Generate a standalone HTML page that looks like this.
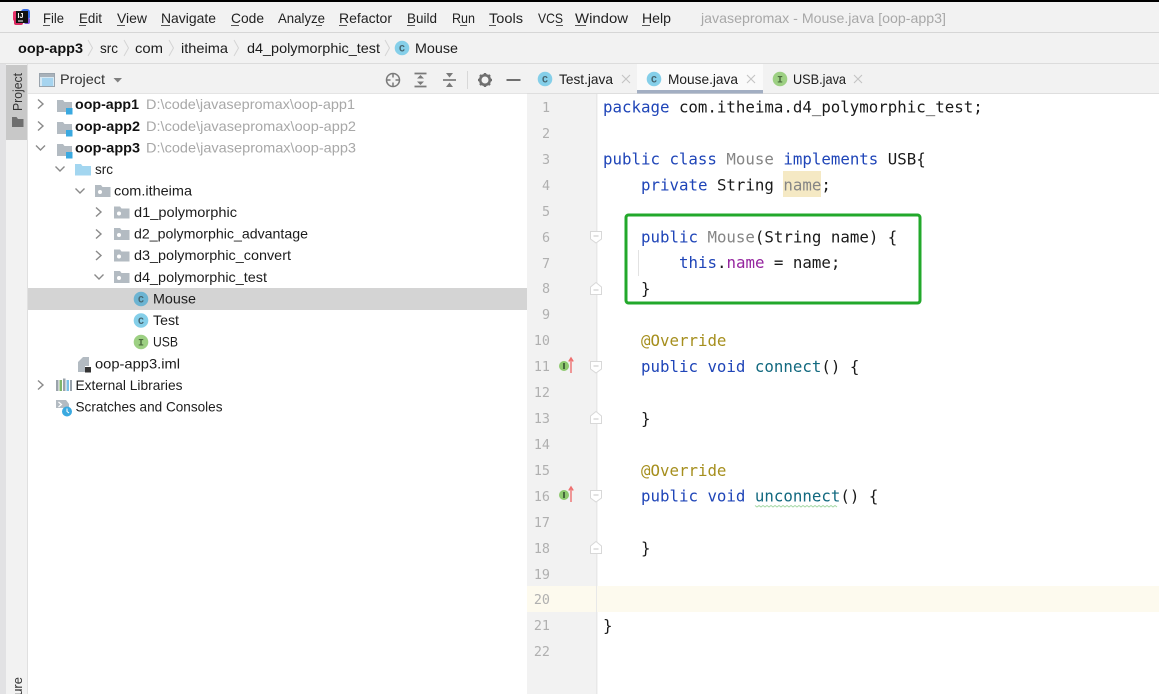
<!DOCTYPE html>
<html><head><meta charset="utf-8"><title>Mouse.java</title>
<style>
html,body{margin:0;padding:0;background:#fff;width:1159px;height:694px;overflow:hidden}
svg{display:block;filter:blur(.35px)}
text{font-family:"Liberation Sans",sans-serif;font-size:14px;fill:#1c1c1c}
.m{fill:#222}
.g{fill:#a8a8a8}
.b{font-weight:bold;fill:#111}
.c text,text.c{font-family:"DejaVu Sans Mono","Liberation Mono",monospace;font-size:15.78px;fill:#1a1a1a}
.n text{font-family:"DejaVu Sans Mono","Liberation Mono",monospace;font-size:13.4px;fill:#b0b0b0}
.k{fill:#1f45b8 !important}
.u{fill:#858585 !important}
.p{fill:#95259f !important}
.f{fill:#12697f !important}
.a{fill:#a68f1e !important}
.ic{font-family:"Liberation Mono",monospace;font-size:10px;font-weight:bold;fill:#46656f;text-anchor:middle}
.ii{font-family:"Liberation Mono",monospace;font-size:10px;font-weight:bold;fill:#4a6b3c;text-anchor:middle}
</style></head><body>
<svg width="1159" height="694" viewBox="0 0 1159 694" xmlns="http://www.w3.org/2000/svg">
<defs>
<g id="chev"><path d="M-3-4.5 2 0-3 4.5" fill="none" stroke="#8a8a8a" stroke-width="1.4"/></g>
<g id="down"><path d="M-4.5-2.5 0 2 4.5-2.5" fill="none" stroke="#8a8a8a" stroke-width="1.4"/></g>
<g id="bc"><path d="M0-8 4.5 0 0 8" fill="none" stroke="#d4d4d4" stroke-width="1"/></g>
<g id="mod"><path d="M0-5H6L7.5-3H15V7H0Z" fill="#b3bbc2"/><rect x="9" y="3" width="6.5" height="6.5" fill="#3aa9e0"/></g>
<g id="pkg"><path d="M0-6H6L7.5-4H15.5V6H0Z" fill="#b3bbc2"/><circle cx="5" cy="1" r="2" fill="#fff"/></g>
<g id="cls"><circle r="7.3" fill="#85cfe9"/><text class="ic" y="3.5">C</text></g>
<g id="int"><circle r="7.3" fill="#9dd083"/><text class="ii" y="3.5">I</text></g>
<g id="x"><path d="M-4-4 4 4M4-4-4 4" stroke="#c4c4c4" stroke-width="1.1"/></g>
<g id="fo"><path d="M.5.5H11.5V8L6 12 .5 8Z" fill="#fff" stroke="#d8d8d8"/><path d="M3.5 5H8.5" stroke="#c4c4c4"/></g>
<g id="fc"><path d="M.5 12.5H11.5V5L6 .5 .5 5Z" fill="#fff" stroke="#d8d8d8"/><path d="M3.5 8H8.5" stroke="#c4c4c4"/></g>
<g id="imp"><circle cx="0" cy="0" r="5" fill="#8ec96f"/><rect x="-1" y="-3" width="2" height="6" fill="#44663a"/><path d="M7-8V7M4.8-4.5 7-8 9.2-4.5" fill="none" stroke="#ee7070" stroke-width="1.4"/></g>
</defs>

<!-- backgrounds -->
<rect width="1159" height="694" fill="#fff"/>
<rect y="2" width="1159" height="62" fill="#f2f2f2"/>
<rect width="1159" height="2" fill="#000"/>
<rect y="32" width="1159" height="1" fill="#d6d6d6"/>
<rect y="63" width="1159" height="1" fill="#dcdcdc"/>
<rect y="64" width="6" height="630" fill="#e2e2e4"/>
<rect x="6" y="64" width="21" height="630" fill="#f2f2f2"/>
<rect x="27" y="64" width="1" height="630" fill="#e0e0e0"/>
<rect x="6" y="65" width="21" height="75" fill="#c8c8c8"/>
<rect x="28" y="64" width="499" height="29" fill="#f2f2f2"/>
<rect x="28" y="93" width="499" height="1" fill="#e4e4e4"/>
<rect x="28" y="288" width="499" height="22" fill="#d4d4d4"/>
<rect x="527" y="64" width="632" height="29" fill="#f2f2f2"/>
<rect x="527" y="93" width="632" height="1" fill="#dedede"/>
<rect x="637" y="64" width="126" height="27" fill="#fafafa"/>
<rect x="637" y="90" width="126" height="3.5" fill="#a2aec2"/>
<rect x="527" y="94" width="69" height="600" fill="#f2f2f2"/>
<rect x="596" y="94" width="1.5" height="600" fill="#e8e8e8"/>
<rect x="597" y="586" width="562" height="26" fill="#fdfaee"/>
<rect x="527" y="586" width="69" height="26" fill="#fdfaee"/>

<!-- logo -->
<rect x="13" y="11" width="9" height="10" rx="2" fill="#e8356b"/>
<rect x="21" y="9" width="9" height="11" rx="3" fill="#3a6ee8"/>
<rect x="14" y="18" width="9" height="7" rx="2" fill="#d9295f"/>
<rect x="24" y="18" width="6" height="6" rx="2" fill="#7a4fd8"/>
<rect x="16" y="11" width="12" height="12" fill="#111"/>
<text x="17.500" y="18" style="font-size:7px;font-weight:bold;fill:#fff">IJ</text>
<rect x="18" y="20.500" width="5" height="1" fill="#fff"/>

<!-- menu -->
<g class="menu">
<text class="m" x="43" y="23" textLength="21" lengthAdjust="spacingAndGlyphs">File</text>
<text class="m" x="79" y="23" textLength="23" lengthAdjust="spacingAndGlyphs">Edit</text>
<text class="m" x="117" y="23" textLength="30" lengthAdjust="spacingAndGlyphs">View</text>
<text class="m" x="161" y="23" textLength="55" lengthAdjust="spacingAndGlyphs">Navigate</text>
<text class="m" x="231" y="23" textLength="33" lengthAdjust="spacingAndGlyphs">Code</text>
<text class="m" x="278" y="23" textLength="47" lengthAdjust="spacingAndGlyphs">Analyze</text>
<text class="m" x="339" y="23" textLength="53" lengthAdjust="spacingAndGlyphs">Refactor</text>
<text class="m" x="407" y="23" textLength="30" lengthAdjust="spacingAndGlyphs">Build</text>
<text class="m" x="452" y="23" textLength="23" lengthAdjust="spacingAndGlyphs">Run</text>
<text class="m" x="489" y="23" textLength="34" lengthAdjust="spacingAndGlyphs">Tools</text>
<text class="m" x="538" y="23" textLength="25" lengthAdjust="spacingAndGlyphs">VCS</text>
<text class="m" x="575" y="23" textLength="53" lengthAdjust="spacingAndGlyphs">Window</text>
<text class="m" x="642" y="23" textLength="29" lengthAdjust="spacingAndGlyphs">Help</text>
<text class="g" x="701" y="23" textLength="245" lengthAdjust="spacingAndGlyphs">javasepromax - Mouse.java [oop-app3]</text>
<path d="M43 25.5h7M79 25.5h7M117 25.5h8M161 25.5h9M231 25.5h8M316 25.5h6M339 25.5h8M407 25.5h8M460 25.5h7M489 25.5h7M556 25.5h7M575 25.5h11M642 25.5h8" stroke="#555" stroke-width="1"/>
</g>

<!-- breadcrumb -->
<text class="b" x="18" y="53" textLength="65" lengthAdjust="spacingAndGlyphs">oop-app3</text>
<use href="#bc" x="88" y="48"/>
<text x="100" y="53" textLength="18" lengthAdjust="spacingAndGlyphs">src</text>
<use href="#bc" x="124" y="48"/>
<text x="135" y="53" textLength="28" lengthAdjust="spacingAndGlyphs">com</text>
<use href="#bc" x="169" y="48"/>
<text x="181" y="53" textLength="47" lengthAdjust="spacingAndGlyphs">itheima</text>
<use href="#bc" x="234" y="48"/>
<text x="247" y="53" textLength="133" lengthAdjust="spacingAndGlyphs">d4_polymorphic_test</text>
<use href="#bc" x="385" y="48"/>
<use href="#cls" x="402" y="48"/>
<text x="415" y="53" textLength="43" lengthAdjust="spacingAndGlyphs">Mouse</text>

<!-- left strip -->
<text transform="translate(22,111) rotate(-90)" textLength="38" lengthAdjust="spacingAndGlyphs" style="font-size:13px;fill:#333">Project</text>
<path d="M12 117H16.500L18 119H23.500V127H12Z" fill="#6e6e6e"/>
<text transform="translate(22,677) rotate(-90)" text-anchor="end" style="font-size:13px;fill:#333">ure</text>

<!-- project header -->
<rect x="39.500" y="73.500" width="15" height="13" fill="#d6e8f3" stroke="#9aa4ad"/>
<rect x="40" y="74" width="14" height="3" fill="#a9b2ba"/>
<rect x="42" y="78" width="11" height="8" fill="#a6d4ef"/>
<text x="60" y="84" textLength="45" lengthAdjust="spacingAndGlyphs" style="fill:#333">Project</text>
<path d="M113.500 78H122L117.750 82.500Z" fill="#808080"/>
<g fill="none" stroke="#7a7a7a" stroke-width="1.5">
<circle cx="393" cy="80" r="6.500"/>
<path d="M393 73.500v4M393 82.500v4M386.500 80h4M395.500 80h4"/>
<path d="M414.500 73.500h12M414.500 86.500h12" stroke-width="1.7"/>
<path d="M443 80h13" stroke-width="1.7"/>
</g>
<path d="M417 78.500 420.500 75 424 78.500ZM417 81.500 420.500 85 424 81.500Z" fill="#7a7a7a"/>
<path d="M446 73 449.500 77.500 453 73ZM446 87 449.500 82.500 453 87Z" fill="#7a7a7a"/>
<rect x="467" y="71" width="1" height="18" fill="#d8d8d8"/>
<g transform="translate(485,80)">
<circle r="4.800" fill="none" stroke="#6f6f6f" stroke-width="2.600"/>
<path d="M0-7V-4.500M0 7V4.500M-7 0H-4.500M7 0H4.500M-5-5-3.300-3.300M5 5 3.300 3.300M5-5 3.300-3.300M-5 5-3.300 3.300" stroke="#6f6f6f" stroke-width="2.400"/>
</g>
<rect x="506.500" y="79" width="14" height="2" fill="#6f6f6f"/>

<!-- tree -->
<use href="#chev" x="41" y="104"/><use href="#mod" x="57" y="105"/>
<text class="b" x="75" y="109" textLength="64" lengthAdjust="spacingAndGlyphs">oop-app1</text>
<text class="g" x="146" y="109" textLength="209" lengthAdjust="spacingAndGlyphs">D:\code\javasepromax\oop-app1</text>
<use href="#chev" x="41" y="126"/><use href="#mod" x="57" y="127"/>
<text class="b" x="75" y="131" textLength="65" lengthAdjust="spacingAndGlyphs">oop-app2</text>
<text class="g" x="146" y="131" textLength="210" lengthAdjust="spacingAndGlyphs">D:\code\javasepromax\oop-app2</text>
<use href="#down" x="40.500" y="148"/><use href="#mod" x="57" y="149"/>
<text class="b" x="75" y="152.500" textLength="65" lengthAdjust="spacingAndGlyphs">oop-app3</text>
<text class="g" x="146" y="152.500" textLength="210" lengthAdjust="spacingAndGlyphs">D:\code\javasepromax\oop-app3</text>
<use href="#down" x="60" y="169"/>
<path d="M75 164H81L82.500 166H91V175.500H75Z" fill="#a3d6f0"/>
<text x="95" y="174" textLength="18" lengthAdjust="spacingAndGlyphs">src</text>
<use href="#down" x="80" y="191"/><use href="#pkg" x="95" y="191"/>
<text x="114" y="195.500" textLength="78" lengthAdjust="spacingAndGlyphs">com.itheima</text>
<use href="#chev" x="99" y="212"/><use href="#pkg" x="114" y="212.500"/>
<text x="134" y="217" textLength="103" lengthAdjust="spacingAndGlyphs">d1_polymorphic</text>
<use href="#chev" x="99" y="234"/><use href="#pkg" x="114" y="234"/>
<text x="134" y="238.500" textLength="174" lengthAdjust="spacingAndGlyphs">d2_polymorphic_advantage</text>
<use href="#chev" x="99" y="255.500"/><use href="#pkg" x="114" y="255.500"/>
<text x="134" y="260" textLength="157" lengthAdjust="spacingAndGlyphs">d3_polymorphic_convert</text>
<use href="#down" x="99" y="277"/><use href="#pkg" x="114" y="277"/>
<text x="134" y="282" textLength="133" lengthAdjust="spacingAndGlyphs">d4_polymorphic_test</text>
<g transform="translate(141,299)"><circle r="7.300" fill="#6cb4d2"/><text class="ic" y="3.500">C</text></g>
<text x="153" y="303.500" textLength="43" lengthAdjust="spacingAndGlyphs">Mouse</text>
<use href="#cls" x="141" y="320.500"/>
<text x="153" y="325" textLength="26" lengthAdjust="spacingAndGlyphs">Test</text>
<use href="#int" x="141" y="342"/>
<text x="153" y="346.500" textLength="25" lengthAdjust="spacingAndGlyphs">USB</text>
<path d="M78 372V362L83 357H89V366H85V372Z" fill="#b3bbc2"/>
<rect x="85" y="367" width="6" height="5.500" fill="#333"/>
<text x="95" y="368.500" textLength="85" lengthAdjust="spacingAndGlyphs">oop-app3.iml</text>
<use href="#chev" x="41" y="385"/>
<g><rect x="56" y="380" width="2.500" height="11" fill="#9aa3ab"/><rect x="59.500" y="380" width="2.500" height="11" fill="#7fb56a"/><rect x="63" y="378.500" width="2.500" height="12.500" fill="#9aa3ab"/><rect x="66.500" y="380" width="2.500" height="11" fill="#7cc0e6"/><rect x="70" y="380" width="2" height="11" fill="#9aa3ab"/></g>
<text x="75.500" y="390" textLength="107" lengthAdjust="spacingAndGlyphs">External Libraries</text>
<path d="M56 400H66L69 404V408H56Z" fill="#b3bbc2"/>
<path d="M58.500 402 61.500 404.500 58.500 407" fill="none" stroke="#fff" stroke-width="1.200"/>
<circle cx="67" cy="411.500" r="5" fill="#3aa9e0"/>
<path d="M67 408.500V411.500L69 413" fill="none" stroke="#fff" stroke-width="1"/>
<text x="75.500" y="411.500" textLength="147" lengthAdjust="spacingAndGlyphs">Scratches and Consoles</text>

<!-- tabs -->
<use href="#cls" x="545" y="79"/>
<text x="559" y="84" textLength="54" lengthAdjust="spacingAndGlyphs">Test.java</text>
<use href="#x" x="626" y="79"/>
<use href="#cls" x="654" y="79"/>
<text x="668" y="84" textLength="70" lengthAdjust="spacingAndGlyphs">Mouse.java</text>
<use href="#x" x="751" y="79"/>
<use href="#int" x="780" y="79"/>
<text x="793" y="84" textLength="53" lengthAdjust="spacingAndGlyphs">USB.java</text>
<use href="#x" x="858" y="79"/>

<!-- gutter numbers -->
<g class="n" text-anchor="end">
<text x="550" y="112">1</text><text x="550" y="138">2</text><text x="550" y="164">3</text><text x="550" y="190">4</text>
<text x="550" y="216">5</text><text x="550" y="242">6</text><text x="550" y="268">7</text><text x="550" y="293">8</text>
<text x="550" y="319">9</text><text x="550" y="345">10</text><text x="550" y="371">11</text><text x="550" y="397">12</text>
<text x="550" y="423">13</text><text x="550" y="449">14</text><text x="550" y="475">15</text><text x="550" y="501">16</text>
<text x="550" y="527">17</text><text x="550" y="553">18</text><text x="550" y="579">19</text><text x="550" y="604">20</text>
<text x="550" y="630">21</text><text x="550" y="656">22</text>
</g>
<use href="#imp" x="564" y="366"/>
<use href="#imp" x="564" y="495"/>
<use href="#fo" x="590" y="231"/>
<use href="#fc" x="590" y="282"/>
<use href="#fo" x="590" y="361"/>
<use href="#fc" x="590" y="411"/>
<use href="#fo" x="590" y="490"/>
<use href="#fc" x="590" y="541"/>

<!-- code -->
<rect x="783" y="171" width="38" height="26" fill="#f5e9c4"/>
<rect x="638" y="250" width="1" height="26" fill="#e2e2e2"/>
<g class="c" xml:space="preserve">
<text x="603" y="112.500"><tspan class="k">package</tspan> com.itheima.d4_polymorphic_test;</text>
<text x="603" y="164.500"><tspan class="k">public class</tspan> <tspan class="u">Mouse</tspan> <tspan class="k">implements</tspan> USB{</text>
<text x="641" y="190.500"><tspan class="k">private</tspan> String <tspan class="u">name</tspan>;</text>
<text x="641" y="242.500"><tspan class="k">public</tspan> <tspan class="u">Mouse</tspan>(String name) {</text>
<text x="679" y="268"><tspan class="k">this</tspan>.<tspan class="p">name</tspan> = name;</text>
<text x="641" y="294">}</text>
<text x="641" y="346"><tspan class="a">@Override</tspan></text>
<text x="641" y="372"><tspan class="k">public void</tspan> <tspan class="f">connect</tspan>() {</text>
<text x="641" y="424">}</text>
<text x="641" y="476"><tspan class="a">@Override</tspan></text>
<text x="641" y="501.500"><tspan class="k">public void</tspan> <tspan class="f">unconnect</tspan>() {</text>
<text x="641" y="553.500">}</text>
<text x="603" y="631">}</text>
</g>
<path d="M755 505.500l2 1.500 2-1.500 2 1.500 2-1.500 2 1.500 2-1.500 2 1.500 2-1.500 2 1.500 2-1.500 2 1.500 2-1.500 2 1.500 2-1.500 2 1.500 2-1.500 2 1.500 2-1.500 2 1.500 2-1.500 2 1.500 2-1.500 2 1.500 2-1.500 2 1.500 2-1.500 2 1.500 2-1.500 2 1.500 2-1.500 2 1.500 2-1.500 2 1.500 2-1.500 2 1.500 2-1.500 2 1.500 2-1.500 2 1.500 2-1.500 2 1.500" fill="none" stroke="#a6d8a6" stroke-width="1"/>

<!-- green box -->
<rect x="626" y="215" width="294" height="88" rx="2.500" fill="none" stroke="#22a82b" stroke-width="3"/>
</svg>
</body></html>
